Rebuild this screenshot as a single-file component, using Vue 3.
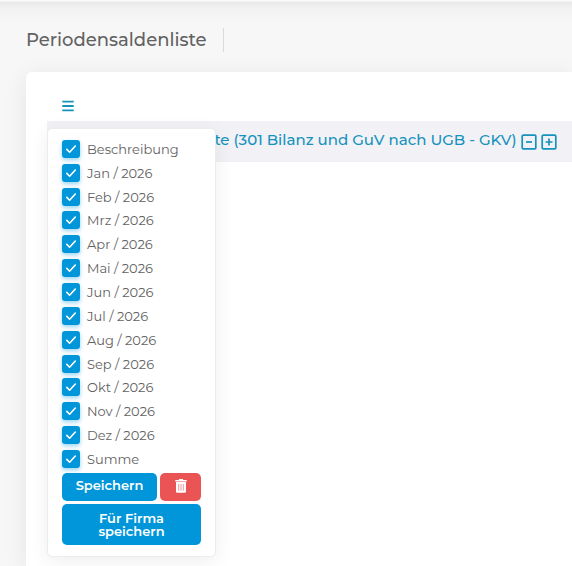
<script setup>
import { ref } from 'vue'

const names = ['Beschreibung', 'Jan / 2026', 'Feb / 2026', 'Mrz / 2026', 'Apr / 2026', 'Mai / 2026', 'Jun / 2026', 'Jul / 2026', 'Aug / 2026', 'Sep / 2026', 'Okt / 2026', 'Nov / 2026', 'Dez / 2026', 'Summe']
const columns = ref(names.map((name) => ({ name, visible: true })))
const menuOpen = ref(true)
</script>

<template>
  <div class="page">
    <header class="page-header">
      <h1>Periodensaldenliste</h1>
    </header>
    <main class="card">
      <div class="toolbar">
        <button class="menu-toggle" type="button" aria-label="Spalten" :aria-expanded="menuOpen" @click="menuOpen = !menuOpen">
          <svg width="12" height="12" viewBox="0 0 12 12"><path d="M.3 1.600h11.400M.3 6h11.400M.3 10.400h11.400" /></svg>
        </button>
        <form v-if="menuOpen" class="column-menu" @submit.prevent>
          <div class="column-list">
            <label v-for="column in columns" :key="column.name">
              <input v-model="column.visible" type="checkbox" />
              <svg class="check" width="18" height="18" viewBox="0 0 18 18"><path d="M4.800 9.400l2.800 2.800 5.700-6.200" /></svg>
              <span>{{ column.name }}</span>
            </label>
          </div>
          <div class="actions">
            <button class="btn save" type="submit">Speichern</button>
            <button class="btn danger" type="button" aria-label="Löschen">
              <svg width="12" height="14" viewBox="0 0 12 14">
                <path class="lid" d="M4.200 0h3.600l.6 1H11.700v1.600H.3V1h3.300z" />
                <path class="lid" d="M1 3h10V12.500a1.300 1.300 0 0 1-1.300 1.300H2.300a1.300 1.300 0 0 1-1.300-1.300z" />
                <path class="ribs" d="M3.700 5v6.700M6 5v6.700M8.300 5v6.700" />
              </svg>
            </button>
            <button class="btn company" type="button">Für Firma speichern</button>
          </div>
        </form>
      </div>
      <div class="report-title">
        <h2>Periodensaldenliste (301 Bilanz und GuV nach UGB - GKV)</h2>
        <button type="button" aria-label="Alle zuklappen">
          <svg width="16" height="16" viewBox="0 0 16 16"><rect x="1.200" y="1.200" width="13.600" height="13.600" rx="1" /><path d="M5 8h6" /></svg>
        </button>
        <button type="button" aria-label="Alle aufklappen">
          <svg width="16" height="16" viewBox="0 0 16 16"><rect x="1.200" y="1.200" width="13.600" height="13.600" rx="1" /><path d="M4.500 8h7M8 4.500v7" /></svg>
        </button>
      </div>
    </main>
  </div>
</template>

<style>
body {
  background: #f7f7f7;
}
</style>

<style scoped>
.page {
  box-sizing: border-box;
  min-height: 100vh;
  display: flex;
  flex-direction: column;
  padding-left: 26px;
  overflow: hidden;
  color: #626262;
  font-family: Montserrat, Inter, sans-serif;
  background: linear-gradient(#fafafa 0, #fafafa 1px, #e9e9e9 2px, #f1f1f1 8px, #f7f7f7 24px);
}
.page-header {
  display: flex;
  padding: 28px 0 20px;
}
h1, h2 {
  margin: 0;
  font-weight: 500;
  white-space: nowrap;
}
h1 {
  padding-right: 16px;
  border-right: 1px solid #d6dce1;
  font-size: 18px;
  line-height: 24px;
}
.card {
  flex: 1;
  padding: 21px 0 21px 21px;
  background: #fff;
  border-radius: 6px 0 0 0;
  box-shadow: 0 4px 25px rgba(0, 0, 0, 0.08);
}
button {
  font-family: inherit;
  border: 0;
  cursor: pointer;
}
.toolbar {
  position: relative;
  height: 28px;
  padding-left: 15px;
}
.menu-toggle {
  display: flex;
  padding: 7px 0;
  background: none;
}
.menu-toggle svg {
  stroke: #1593bd;
  stroke-width: 1.9;
}
.column-menu {
  position: absolute;
  z-index: 2;
  top: 35px;
  left: 0;
  box-sizing: border-box;
  width: 169px;
  padding: 8px 14px 11px;
  background: #fff;
  border: 1px solid #ececec;
  border-radius: 5px;
  box-shadow: 0 4px 20px rgba(0, 0, 0, 0.07);
}
.column-list {
  display: grid;
  grid-auto-rows: 1fr;
  height: 334px;
}
label {
  position: relative;
  display: flex;
  align-items: center;
  gap: 7px;
  font-size: 13px;
  line-height: 20px;
}
input {
  appearance: none;
  width: 18px;
  height: 18px;
  margin: 0;
  border: 2px solid #b4b4b4;
  border-radius: 3px;
}
input:checked {
  background: #0096d9;
  border-color: #0096d9;
  box-shadow: 0 2px 4px rgba(0, 150, 217, 0.4);
}
.check {
  position: absolute;
  left: 0;
  fill: none;
  stroke: #fff;
  stroke-width: 1.6;
  stroke-linecap: round;
  stroke-linejoin: round;
  pointer-events: none;
}
.actions {
  display: flex;
  flex-wrap: wrap;
  gap: 3px;
  padding-top: 2px;
}
.btn {
  color: #fff;
  background: #0096d9;
  border-radius: 5px;
  font-size: 13px;
  font-weight: 600;
  line-height: 13px;
}
.save {
  flex: 1;
  height: 28px;
  padding: 0 0 3px;
}
.danger {
  display: flex;
  align-items: center;
  justify-content: center;
  width: 41px;
  height: 28px;
  padding: 0 0 3px;
  background: #ea5455;
}
.lid {
  fill: #fff;
}
.ribs {
  stroke: #ea5455;
  stroke-width: 0.6;
}
.company {
  width: 100%;
  height: 41px;
  padding: 0 28px;
}
.report-title {
  display: flex;
  align-items: center;
  gap: 4px;
  height: 41px;
  padding-left: 32px;
  color: #1593bd;
  background: #f2f1f6;
}
h2 {
  font-size: 15px;
  line-height: 20px;
  padding-bottom: 4px;
}
.report-title button {
  display: flex;
  padding: 0;
  color: inherit;
  background: none;
}
.report-title svg {
  fill: none;
  stroke: currentColor;
  stroke-width: 1.7;
}
</style>
